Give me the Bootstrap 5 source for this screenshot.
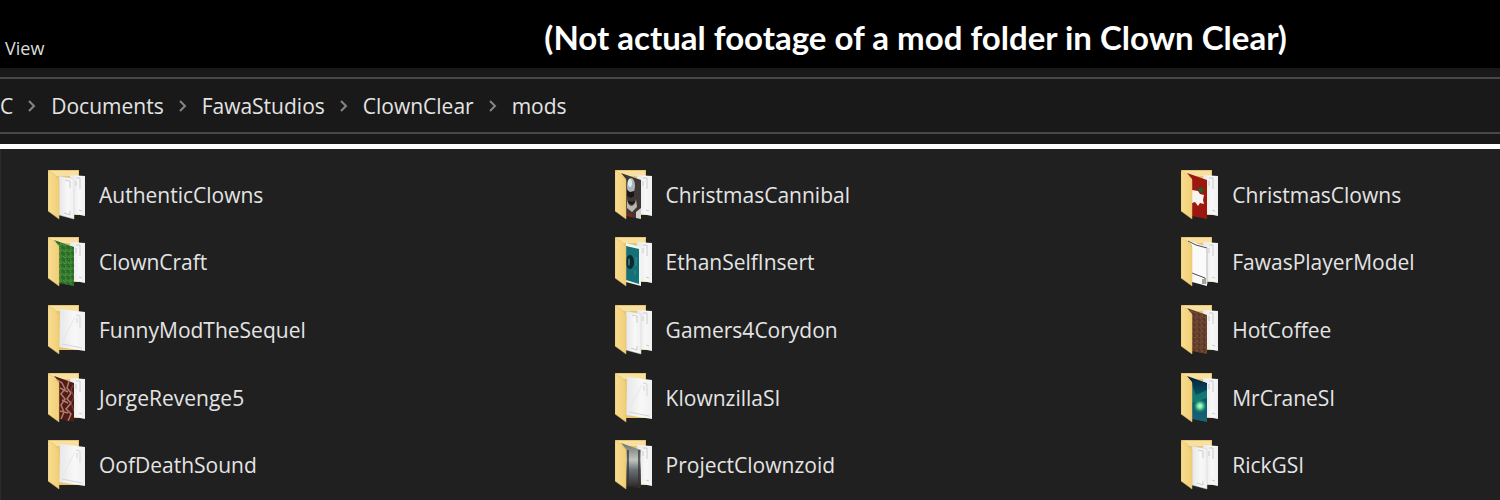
<!DOCTYPE html>
<html lang="en">
<head>
<meta charset="utf-8">
<meta name="viewport" content="width=device-width, initial-scale=1">
<title>mods</title>
<link href="https://cdn.jsdelivr.net/npm/bootstrap@5.3.0/dist/css/bootstrap.min.css" rel="stylesheet">
<style>
body { background: #202020; color: #e4e4e4; font-family: "Open Sans", "Noto Sans", sans-serif; font-size: 21px; line-height: 28px; }
a { color: inherit; text-decoration: none; }
.menu-bar { background: #000; height: 68px; }
.view-tab { font-size: 18px; line-height: 24px; padding: 36px 0 8px 5px; color: #dcdcdc; }
.caption-text { font-family: Lato, sans-serif; font-weight: 700; font-size: 33px; line-height: 40px; color: #fff; margin: 17px 0 0 500px; }
.address-area { background: #191919; padding: 9px 0 10px; border-bottom: 5px solid #fff; }
.address-bar { border: solid #484848; border-width: 2px 0; height: 57px; }
.crumbs, .crumbs li { gap: 15px; }
.chevron { width: 8px; height: 12px; fill: none; stroke: #858585; stroke-width: 2; }
.file-pane { border-left: 1px solid #2b2b2b; padding: 12px 0 1px; overflow: hidden; }
.file-grid { display: grid; grid-template-columns: repeat(3, 37.8%); grid-auto-rows: 1fr; }
.file-link { padding-left: 47px; gap: 13px; }
.folder-icon { width: 38px; height: 50px; }
</style>
</head>
<body>
<svg class="position-absolute" width="0" height="0" aria-hidden="true">
  <defs>
    <linearGradient id="gold"><stop offset="0" stop-color="#f7dc90"/><stop offset="1" stop-color="#f2cf76"/></linearGradient>
    <linearGradient id="paper"><stop offset="0" stop-color="#e6e7e9"/><stop offset=".6" stop-color="#f8f8f8"/><stop offset="1" stop-color="#f0f0f1"/></linearGradient>
    <linearGradient id="mist" x2="0" y2="1"><stop offset="0" stop-color="#5e6260"/><stop offset=".4" stop-color="#c0c5c1"/><stop offset=".6" stop-color="#697076"/><stop offset="1" stop-color="#241d19"/></linearGradient>
    <linearGradient id="sea" x2="0" y2="1"><stop offset="0" stop-color="#06152f"/><stop offset=".45" stop-color="#075465"/><stop offset="1" stop-color="#1a6378"/></linearGradient>
    <radialGradient id="glow"><stop offset="0" stop-color="#e3ffd9"/><stop offset=".4" stop-color="#5fdc96"/><stop offset="1" stop-color="#138b78" stop-opacity="0"/></radialGradient>
    <pattern id="grass" width="5" height="6" patternUnits="userSpaceOnUse"><path fill="#32762c" d="M0 0h5v6H0z"/><path d="M0 1l2 2M3 0v3M2 5l2-1" stroke="#4f9746"/><path d="M1 4v2M4 3v2" stroke="#225a22"/></pattern>
    <pattern id="coffee" width="5" height="5" patternUnits="userSpaceOnUse"><path fill="#65402d" d="M0 0h5v5H0z"/><path d="M0 1h2M3 3h2" stroke="#7c523c"/><path d="M2 4h2M3 1h1" stroke="#4a2c20"/></pattern>
    <clipPath id="sheet"><path d="M6 3l20 7v39l-15-3V9z"/></clipPath>
    <g id="back"><path fill="#e8c571" d="M0 0h31v45H8z"/><path fill="#f8e1a0" d="M1 1h29v5H1z"/></g>
    <g id="rear"><path fill="url(#paper)" d="M22 5l15 1v40l-15-3z"/><path d="M28 8h4v11M28 11v5M31 40l3 1" fill="none" stroke="#c9cacc"/></g>
    <path id="flap" fill="url(#gold)" stroke="#e3be68" stroke-width=".5" d="M0 1l6 3 5 6v39L0 41z"/>
    <symbol id="two" viewBox="0 0 38 50"><use href="#back"/><use href="#rear"/><path fill="url(#paper)" stroke="#d2d3d4" stroke-width=".5" d="M11 6l15 3v40l-15-4z"/><path d="M17 10l5 1v7M16 43l6 2v-4" fill="none" stroke="#cccdd0"/><use href="#flap"/></symbol>
    <symbol id="one" viewBox="0 0 38 50"><use href="#back"/><path fill="url(#paper)" d="M12 4l25 3v39l-26-4z"/><path d="M28 10l4 1v12M29 13v5M14 39l20 4" fill="none" stroke="#d5d6d9"/><path d="M15 35L27 12" stroke="#e6e7e9"/><use href="#flap"/></symbol>
  </defs>
</svg>
<div class="min-vh-100 d-flex flex-column overflow-hidden">
  <header class="menu-bar d-flex align-items-start">
    <a class="view-tab" href="#">View</a>
    <h1 class="caption-text text-nowrap">(Not actual footage of a mod folder in Clown Clear)</h1>
  </header>
  <div class="address-area">
    <nav class="address-bar d-flex align-items-center" aria-label="Folder path">
      <ol class="crumbs list-unstyled d-flex mb-0">
        <li class="d-flex align-items-center"><a href="#">C</a><svg class="chevron" viewBox="0 0 8 12"><path d="M1 1l5 5-5 5"/></svg></li>
        <li class="d-flex align-items-center"><a href="#">Documents</a><svg class="chevron" viewBox="0 0 8 12"><path d="M1 1l5 5-5 5"/></svg></li>
        <li class="d-flex align-items-center"><a href="#">FawaStudios</a><svg class="chevron" viewBox="0 0 8 12"><path d="M1 1l5 5-5 5"/></svg></li>
        <li class="d-flex align-items-center"><a href="#">ClownClear</a><svg class="chevron" viewBox="0 0 8 12"><path d="M1 1l5 5-5 5"/></svg></li>
        <li><a href="#" aria-current="page">mods</a></li>
      </ol>
    </nav>
  </div>
  <main class="file-pane flex-fill d-flex flex-column">
    <ul class="file-grid list-unstyled flex-fill mb-0">
      <li class="d-flex"><a class="file-link d-flex align-items-center" href="#"><svg class="folder-icon" viewBox="0 0 38 50"><use href="#two"/></svg>AuthenticClowns</a></li>
      <li class="d-flex"><a class="file-link d-flex align-items-center" href="#"><svg class="folder-icon" viewBox="0 0 38 50"><use href="#back"/><use href="#rear"/><g clip-path="url(#sheet)"><path fill="#3d3836" d="M0 0h38v50H0z"/><ellipse cx="16" cy="16" rx="4" ry="8" fill="#a9b6ba"/><ellipse cx="15" cy="13" rx="2" ry="4" fill="#d9edf0"/><path d="M12 20l3 2 4-1v5l-3 2-4-2z" fill="#191615"/><path d="M12 29c1 9 8 9 9 0l1 8-5 5-5-4z" fill="#bcb5b0"/><path d="M13 31c1 4 6 4 7 0l-3 1z" fill="#171313"/><path d="M11 45l5-2 3 5z" fill="#8e1f1b"/><path d="M21 42l5-4v11h-5z" fill="#d3d0ce"/></g><use href="#flap"/></svg>ChristmasCannibal</a></li>
      <li class="d-flex"><a class="file-link d-flex align-items-center" href="#"><svg class="folder-icon" viewBox="0 0 38 50"><use href="#back"/><use href="#rear"/><g clip-path="url(#sheet)"><path fill="#9c1710" d="M0 0h38v50H0z"/><path fill="#f8f4f0" d="M11 20l6 1 2 3 4 1-1 5 1 4-4-1-2 3-3-4-3 1z"/><path fill="#285d23" d="M17 18l4-1 2 3-2 3-3-1z"/></g><use href="#flap"/></svg>ChristmasClowns</a></li>

      <li class="d-flex"><a class="file-link d-flex align-items-center" href="#"><svg class="folder-icon" viewBox="0 0 38 50"><use href="#back"/><use href="#rear"/><path clip-path="url(#sheet)" fill="url(#grass)" d="M0 0h38v50H0z"/><use href="#flap"/></svg>ClownCraft</a></li>
      <li class="d-flex"><a class="file-link d-flex align-items-center" href="#"><svg class="folder-icon" viewBox="0 0 38 50"><use href="#back"/><use href="#rear"/><path fill="#eef6f6" d="M11 6l15 4v39l-15-4z"/><path fill="#167078" d="M11 9l13 3v35l-13-4z"/><ellipse cx="15" cy="25" rx="4" ry="7" fill="#0b292d"/><path d="M21 20v9M20 33v5" stroke="#2f8f94"/><ellipse cx="14" cy="25" rx="1" ry="4" fill="#32787a"/><use href="#flap"/></svg>EthanSelfInsert</a></li>
      <li class="d-flex"><a class="file-link d-flex align-items-center" href="#"><svg class="folder-icon" viewBox="0 0 38 50"><use href="#back"/><use href="#rear"/><path fill="#fafafa" d="M6 3l20 7v39l-15-4V8z"/><path d="M7 4l8 4 11 3M11 36l13 5v6M22 47v-5" fill="none" stroke="#4d4d4a"/><path d="M26 11v36" stroke="#bbb"/><use href="#flap"/></svg>FawasPlayerModel</a></li>

      <li class="d-flex"><a class="file-link d-flex align-items-center" href="#"><svg class="folder-icon" viewBox="0 0 38 50"><use href="#one"/></svg>FunnyModTheSequel</a></li>
      <li class="d-flex"><a class="file-link d-flex align-items-center" href="#"><svg class="folder-icon" viewBox="0 0 38 50"><use href="#two"/></svg>Gamers4Corydon</a></li>
      <li class="d-flex"><a class="file-link d-flex align-items-center" href="#"><svg class="folder-icon" viewBox="0 0 38 50"><use href="#back"/><use href="#rear"/><path clip-path="url(#sheet)" fill="url(#coffee)" d="M0 0h38v50H0z"/><use href="#flap"/></svg>HotCoffee</a></li>

      <li class="d-flex"><a class="file-link d-flex align-items-center" href="#"><svg class="folder-icon" viewBox="0 0 38 50"><use href="#back"/><use href="#rear"/><g clip-path="url(#sheet)"><path fill="#4a1d1a" d="M0 0h38v50H0z"/><path d="M8 6l6 4 3 6-4 5 4 5-4 6 3 7-3 7M21 8l-2 7 4 5-4 6 4 4-5 6 5 5-3 7M12 15l8 4M14 27l6 3M12 38l8 2" fill="none" stroke="#b9796a" stroke-width="1.5"/><path d="M25 12l-2 5 3 7-3 6 3 8" fill="none" stroke="#8d463d"/></g><use href="#flap"/></svg>JorgeRevenge5</a></li>
      <li class="d-flex"><a class="file-link d-flex align-items-center" href="#"><svg class="folder-icon" viewBox="0 0 38 50"><use href="#one"/></svg>KlownzillaSI</a></li>
      <li class="d-flex"><a class="file-link d-flex align-items-center" href="#"><svg class="folder-icon" viewBox="0 0 38 50"><use href="#back"/><use href="#rear"/><g clip-path="url(#sheet)"><path fill="url(#sea)" d="M0 0h38v50H0z"/><path fill="#1b8f7c" opacity=".6" d="M11 12l4 10 11-5v8L11 30z"/><circle cx="19" cy="33" r="7" fill="url(#glow)"/></g><use href="#flap"/></svg>MrCraneSI</a></li>

      <li class="d-flex"><a class="file-link d-flex align-items-center" href="#"><svg class="folder-icon" viewBox="0 0 38 50"><use href="#one"/></svg>OofDeathSound</a></li>
      <li class="d-flex"><a class="file-link d-flex align-items-center" href="#"><svg class="folder-icon" viewBox="0 0 38 50"><use href="#back"/><use href="#rear"/><g clip-path="url(#sheet)"><path fill="url(#mist)" d="M0 0h38v50H0z"/><path d="M13 10v34M24 10v38" stroke="#343330" stroke-width="2" opacity=".7"/></g><use href="#flap"/></svg>ProjectClownzoid</a></li>
      <li class="d-flex"><a class="file-link d-flex align-items-center" href="#"><svg class="folder-icon" viewBox="0 0 38 50"><use href="#two"/></svg>RickGSI</a></li>
    </ul>
  </main>
</div>
<script src="https://cdn.jsdelivr.net/npm/bootstrap@5.3.0/dist/js/bootstrap.bundle.min.js"></script>
</body>
</html>
